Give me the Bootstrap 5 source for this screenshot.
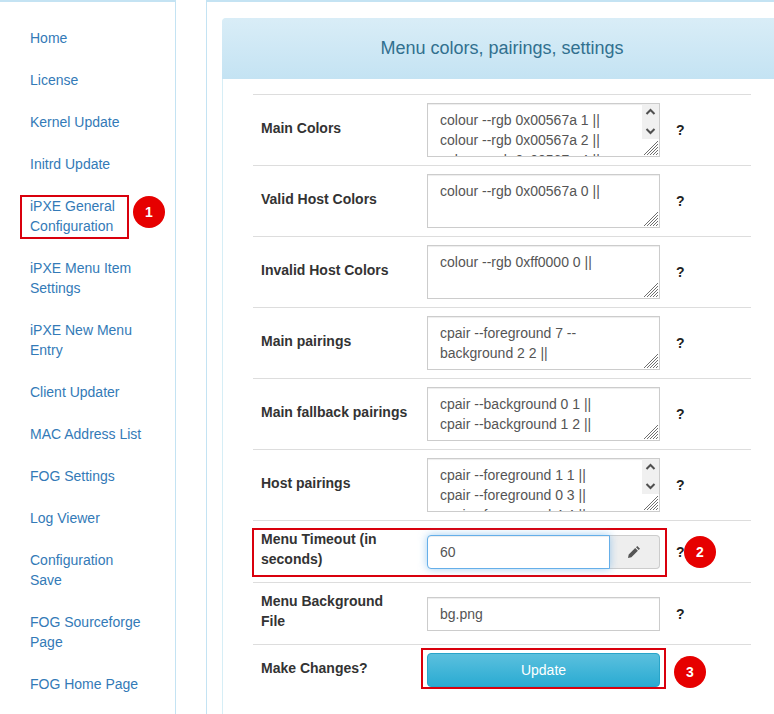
<!DOCTYPE html>
<html lang="en">
<head>
<meta charset="utf-8">
<title>iPXE General Configuration</title>
<link rel="stylesheet" href="https://cdn.jsdelivr.net/npm/bootstrap@5.3.0/dist/css/bootstrap.min.css">
<style>
html,body{height:100%;overflow:hidden;background:#fff;}
body{font-family:"Liberation Sans",Arial,sans-serif;font-size:14px;line-height:20px;color:#333;}
.stage{position:relative;height:714px;width:774px;overflow:hidden;}
.side-col{width:176px;flex:none;border-top:2px solid #c4e3f3;border-right:1px solid #c4e3f3;padding-top:15px;}
.side-link{padding:11px 0 11px 30px;width:146px;color:#337ab7;font-size:14px;line-height:20px;}
.main-col{width:608px;flex:none;margin-left:30px;border-top:2px solid #c4e3f3;border-left:1px solid #c4e3f3;padding:16px 0 0 15px;}
.cfg-panel{width:560px;min-height:720px;border:1px solid #d6eef6;border-bottom:0;border-radius:4px 4px 0 0;}
.cfg-head{height:61px;margin:-1px -1px 0;background:linear-gradient(to bottom,#d9edf7,#c4e3f3);border:0;border-radius:4px 4px 0 0;color:#31708f;font-size:18px;line-height:61px;text-align:center;padding:0;}
.cfg-body{padding:15px 30px 0;}
.cfg-table{width:498px;margin:0;border-collapse:collapse;table-layout:fixed;}
.cfg-table td{border:0;border-top:1px solid #ddd;padding:8px;vertical-align:middle;color:#333;background:transparent;box-shadow:none;}
.cfg-table td.lbl{width:166px;font-weight:700;padding-bottom:13px;}
.cfg-table td.fld{width:249px;}
.cfg-table td.hlp{font-weight:700;color:#222;}
.area-wrap{position:relative;width:233px;height:54px;}
.cfg-area{display:block;width:233px;height:54px;min-height:0;padding:6px 12px;border:1px solid #ccc;border-radius:0;font-size:14px;line-height:20px;color:#555;resize:none;box-shadow:inset 0 1px 1px rgba(0,0,0,.075);}
.area-grip{position:absolute;right:1px;bottom:1px;display:block;}
.area-bar{position:absolute;right:1px;top:1px;display:block;}
.cfg-input{height:34px;min-height:0;padding:6px 12px;border:1px solid #ccc;border-radius:0;font-size:14px;line-height:20px;color:#555;box-shadow:inset 0 1px 1px rgba(0,0,0,.075);}
.cfg-focus{border-color:#66afe9;border-radius:4px 0 0 4px;box-shadow:inset 0 1px 1px rgba(0,0,0,.075),0 0 8px rgba(102,175,233,.6);position:relative;z-index:3;}
.cfg-addon{width:51px;flex:none;justify-content:center;background:#eee;border:1px solid #ccc;border-left:0;border-radius:0 4px 4px 0;padding:0;color:#555;}
.cfg-btn{display:block;width:233px;height:34px;padding:6px 12px;font-size:14px;line-height:20px;color:#fff;background:linear-gradient(to bottom,#5bc0de,#2aabd2);border:1px solid #28a4c9;border-radius:4px;}
.mark-box{position:absolute;border:2px solid #d9000d;pointer-events:none;}
.mark-num{position:absolute;width:32px;height:32px;border-radius:50%;background:#e60000;color:#fff;font-weight:700;font-size:14px;line-height:32px;text-align:center;}
</style>
</head>
<body>
<svg width="0" height="0" class="d-block position-absolute" aria-hidden="true">
  <defs>
    <symbol id="grip" viewBox="0 0 17 17"><path d="M2 16 16 2M5 16 16 5M8 16l8-8M11 16l5-5M14 16l2-2" stroke="#6f6f6f" stroke-width="1" fill="none"/></symbol>
    <symbol id="bar" viewBox="0 0 17 35"><rect width="17" height="35" fill="#f0f0f0"/><path d="M4.5 10 8.5 6l4 4M4.5 25l4 4 4-4" fill="none" stroke="#505050" stroke-width="2"/></symbol>
  </defs>
</svg>
<div class="stage d-flex">
  <nav class="side-col nav flex-column flex-nowrap align-content-start">
    <a class="side-link nav-link" href="#">Home</a>
    <a class="side-link nav-link" href="#">License</a>
    <a class="side-link nav-link" href="#">Kernel Update</a>
    <a class="side-link nav-link" href="#">Initrd Update</a>
    <a class="side-link nav-link" href="#">iPXE General Configuration</a>
    <a class="side-link nav-link" href="#">iPXE Menu Item Settings</a>
    <a class="side-link nav-link" href="#">iPXE New Menu Entry</a>
    <a class="side-link nav-link" href="#">Client Updater</a>
    <a class="side-link nav-link" href="#">MAC Address List</a>
    <a class="side-link nav-link" href="#">FOG Settings</a>
    <a class="side-link nav-link" href="#">Log Viewer</a>
    <a class="side-link nav-link" href="#">Configuration Save</a>
    <a class="side-link nav-link" href="#">FOG Sourceforge Page</a>
    <a class="side-link nav-link" href="#">FOG Home Page</a>
  </nav>
  <main class="main-col">
    <div class="cfg-panel card">
      <div class="cfg-head card-header">Menu colors, pairings, settings</div>
      <div class="cfg-body card-body">
        <table class="cfg-table table">
          <tbody>
            <tr>
              <td class="lbl">Main Colors</td>
              <td class="fld"><div class="area-wrap"><textarea class="cfg-area form-control">colour --rgb 0x00567a 1 ||
colour --rgb 0x00567a 2 ||
colour --rgb 0x00567a 4 ||
colour --rgb 0x00567a 5 ||</textarea><svg class="area-bar" width="17" height="35"><use href="#bar"/></svg><svg class="area-grip" width="17" height="17"><use href="#grip"/></svg></div></td>
              <td class="hlp">?</td>
            </tr>
            <tr>
              <td class="lbl">Valid Host Colors</td>
              <td class="fld"><div class="area-wrap"><textarea class="cfg-area form-control">colour --rgb 0x00567a 0 ||</textarea><svg class="area-grip" width="17" height="17"><use href="#grip"/></svg></div></td>
              <td class="hlp">?</td>
            </tr>
            <tr>
              <td class="lbl">Invalid Host Colors</td>
              <td class="fld"><div class="area-wrap"><textarea class="cfg-area form-control">colour --rgb 0xff0000 0 ||</textarea><svg class="area-grip" width="17" height="17"><use href="#grip"/></svg></div></td>
              <td class="hlp">?</td>
            </tr>
            <tr>
              <td class="lbl">Main pairings</td>
              <td class="fld"><div class="area-wrap"><textarea class="cfg-area form-control">cpair --foreground 7 --background 2 2 ||</textarea><svg class="area-grip" width="17" height="17"><use href="#grip"/></svg></div></td>
              <td class="hlp">?</td>
            </tr>
            <tr>
              <td class="lbl">Main fallback pairings</td>
              <td class="fld"><div class="area-wrap"><textarea class="cfg-area form-control">cpair --background 0 1 ||
cpair --background 1 2 ||</textarea><svg class="area-grip" width="17" height="17"><use href="#grip"/></svg></div></td>
              <td class="hlp">?</td>
            </tr>
            <tr>
              <td class="lbl">Host pairings</td>
              <td class="fld"><div class="area-wrap"><textarea class="cfg-area form-control">cpair --foreground 1 1 ||
cpair --foreground 0 3 ||
cpair --foreground 4 4 ||
cpair --foreground 5 5 ||</textarea><svg class="area-bar" width="17" height="35"><use href="#bar"/></svg><svg class="area-grip" width="17" height="17"><use href="#grip"/></svg></div></td>
              <td class="hlp">?</td>
            </tr>
            <tr>
              <td class="lbl">Menu Timeout (in seconds)</td>
              <td class="fld">
                <div class="input-group">
                  <input class="cfg-input cfg-focus form-control" type="text" value="60">
                  <span class="cfg-addon input-group-text">
                    <svg width="14" height="14" viewBox="0 0 14 14" aria-hidden="true"><path fill="#555" d="M10.3 1 13 3.7 11.7 5 9 2.3ZM8.2 3.1 10.9 5.8 4.4 12.3 1 13 1.7 9.6Z"/></svg>
                  </span>
                </div>
              </td>
              <td class="hlp">?</td>
            </tr>
            <tr>
              <td class="lbl">Menu Background File</td>
              <td class="fld"><input class="cfg-input form-control" type="text" value="bg.png"></td>
              <td class="hlp">?</td>
            </tr>
            <tr>
              <td class="lbl">Make Changes?</td>
              <td class="fld"><button class="cfg-btn btn" type="button">Update</button></td>
              <td class="hlp"></td>
            </tr>
          </tbody>
        </table>
      </div>
    </div>
  </main>
  <div class="mark-box" style="left:20px;top:195px;width:109px;height:44px"></div>
  <div class="mark-num" style="left:133px;top:196px">1</div>
  <div class="mark-box" style="left:252px;top:528px;width:415px;height:49px"></div>
  <div class="mark-num" style="left:684px;top:536px">2</div>
  <div class="mark-box" style="left:421px;top:648px;width:245px;height:41px"></div>
  <div class="mark-num" style="left:674px;top:656px">3</div>
</div>
<script src="https://cdn.jsdelivr.net/npm/bootstrap@5.3.0/dist/js/bootstrap.bundle.min.js"></script>
</body>
</html>
